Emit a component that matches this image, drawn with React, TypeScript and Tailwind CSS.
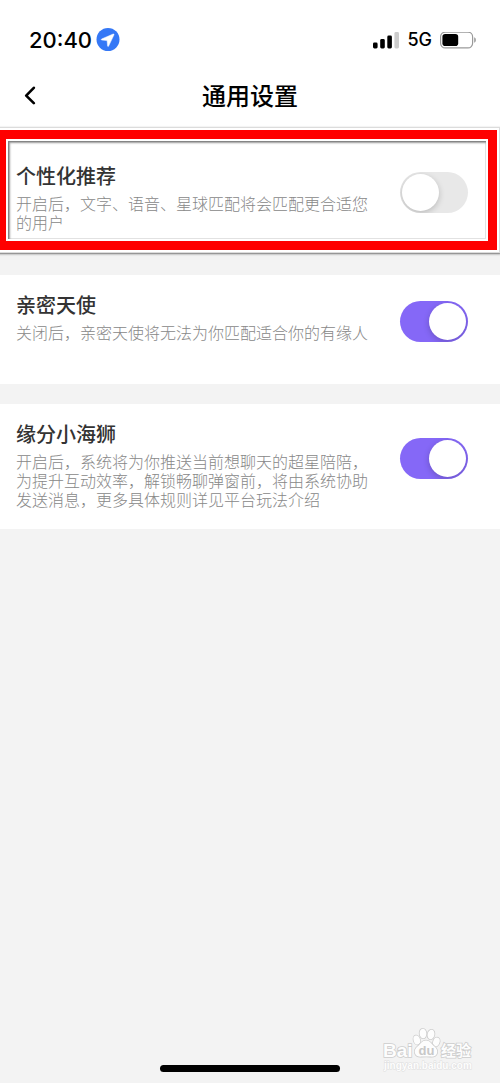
import { useId, useState } from "react";

type Setting = {
  key: string;
  title: string;
  desc: string;
  enabled: boolean;
  highlighted?: boolean;
};

const SETTINGS: Setting[] = [
  {
    key: "recommend",
    title: "个性化推荐",
    desc: "开启后，文字、语音、星球匹配将会匹配更合适您的用户",
    enabled: false,
    highlighted: true,
  },
  {
    key: "angel",
    title: "亲密天使",
    desc: "关闭后，亲密天使将无法为你匹配适合你的有缘人",
    enabled: true,
  },
  {
    key: "sealion",
    title: "缘分小海狮",
    desc: "开启后，系统将为你推送当前想聊天的超星陪陪，为提升互动效率，解锁畅聊弹窗前，将由系统协助发送消息，更多具体规则详见平台玩法介绍",
    enabled: true,
  },
];

function StatusBar() {
  return (
    <div className="flex h-16 items-center justify-between pt-4 pr-6 pl-[29px] font-['Inter','Liberation_Sans',sans-serif] text-black">
      <div className="flex items-center gap-1">
        <span className="text-[22px] leading-6 font-medium">20:40</span>
        <svg className="size-6" viewBox="0 0 24 24" aria-hidden="true">
          <circle cx="12" cy="11.5" r="11.5" fill="#3578f6" />
          <path d="M17.2 6 5.6 11c-.5.3-.4.9.1 1l5.4.6.5 5.4c.1.6.8.7 1 .1L18 6.800c.2-.6-.2-1-.8-.8z" fill="#fff" stroke="#fff" strokeWidth=".5" strokeLinejoin="round" />
        </svg>
      </div>
      <div className="flex items-center gap-2">
        <svg className="h-[17px] w-[26px]" viewBox="0 0 26 17" aria-hidden="true">
          <rect x="0" y="10.5" width="4.6" height="6" rx="1.4" />
          <rect x="7.2" y="7" width="4.6" height="9.5" rx="1.4" />
          <rect x="14.3" y="3.6" width="4.6" height="12.9" rx="1.4" />
          <rect x="21.4" y="0" width="4.6" height="16.5" rx="1.4" fill="#ccc" />
        </svg>
        <span className="text-lg leading-6 font-medium">5G</span>
        <svg className="h-[17px] w-9" viewBox="0 0 36 17" aria-hidden="true">
          <rect x=".6" y=".1" width="32" height="15.8" rx="4.6" fill="none" stroke="#9a9a9a" strokeWidth="1.2" />
          <rect x="2.4" y="1.9" width="15.8" height="12.2" rx="2.8" />
          <path d="M34.2 5.3c2.2.8 2.2 4.600 0 5.400z" fill="#9a9a9a" />
        </svg>
      </div>
    </div>
  );
}

function NavBar({ title }: { title: string }) {
  return (
    <header className="grid h-[62px] grid-cols-[1fr_auto_1fr] items-center px-5 text-black">
      <button type="button" aria-label="返回" className="flex size-5 cursor-pointer items-center justify-center">
        <svg className="size-5" viewBox="0 0 20 20" fill="none" stroke="currentColor" strokeWidth="2.6" strokeLinecap="round" strokeLinejoin="round">
          <path d="M13.8 2.8 6.2 10.6l7.6 7.6" />
        </svg>
      </button>
      <h1 className="text-2xl leading-8 font-medium">{title}</h1>
    </header>
  );
}

function Highlight() {
  return (
    <div className="pointer-events-none absolute -top-[18px] right-px bottom-[3px] -left-[5px] border-2 border-white shadow-[0_0_0_1px_#dcdcdc,1px_1px_2px_1px_#666]">
      <div className="h-full border-[9px] border-[#fe0000]">
        <div className="h-full border-2 border-white shadow-[inset_1px_1px_0_#858585,inset_2px_2px_2px_#999,inset_-1px_-1px_0_#e2e2e2]" />
      </div>
    </div>
  );
}

function SettingRow({ setting }: { setting: Setting }) {
  const id = useId();
  const [on, setOn] = useState(setting.enabled);

  return (
    <section className="relative bg-white pb-4">
      <div className="flex min-h-[93px] items-center justify-between gap-4 pr-8 pl-4">
        <div className="max-w-[360px] self-start pt-4 pb-1">
          <label htmlFor={id} className="block text-xl leading-7 font-medium text-[#333]">
            {setting.title}
          </label>
          <p id={`${id}-desc`} className="mt-1 text-base leading-[19px] font-light text-[#888]">
            {setting.desc}
          </p>
        </div>
        <input
          id={id}
          type="checkbox"
          role="switch"
          aria-describedby={`${id}-desc`}
          checked={on}
          onChange={(e) => setOn(e.target.checked)}
          className="h-[41px] w-[68px] shrink-0 cursor-pointer appearance-none overflow-hidden rounded-full bg-[#e8e8e8] p-[2px] before:block before:size-[37px] before:rounded-full before:bg-white before:shadow-[0_2px_6px_rgba(0,0,0,0.2)] checked:bg-[#8568f7] checked:before:ml-auto"
        />
      </div>
      {setting.highlighted && <Highlight />}
    </section>
  );
}

function Watermark() {
  return (
    <svg
      className="absolute right-6 bottom-2 h-12 w-24"
      viewBox="0 0 96 48"
      fill="#fdfdfd"
      stroke="#cdcdcd"
      strokeWidth="1.6"
      paintOrder="stroke"
      role="img"
      aria-label="Baidu 经验"
    >
      <text x="3" y="30" fontSize="19" fontWeight="700" fontFamily="Liberation Sans, sans-serif">Bai</text>
      <ellipse cx="36.800" cy="13" rx="3.2" ry="4.6" transform="rotate(-16 36.800 13)" />
      <ellipse cx="43" cy="6.500" rx="3.400" ry="4.800" transform="rotate(-4 43 6.500)" />
      <ellipse cx="51" cy="7.500" rx="3.400" ry="4.800" transform="rotate(12 51 7.500)" />
      <ellipse cx="56.300" cy="15" rx="3.200" ry="4.600" transform="rotate(20 56.300 15)" />
      <path d="M46 13.500c-4 0-5.500 3.500-8.200 5.800-2.500 2-3.600 4.200-2.800 7 1 3.200 4.200 3.600 6.800 3.300 3-.3 5.600-.3 8.400 0 3 .3 5.800-.1 6.800-3.300.8-2.800-.4-5-2.800-7-2.700-2.300-4.200-5.800-8.200-5.800z" />
      <text x="38.500" y="28" fontSize="13" fontWeight="700" fill="#c8c8c8" stroke="none" fontFamily="Liberation Sans, sans-serif">du</text>
      <text x="61" y="29" fontSize="15" fontWeight="700" fontFamily="Noto Sans CJK SC, sans-serif">经验</text>
      <text x="4" y="42" fontSize="10" fontWeight="700" strokeWidth="1" stroke="#dedede" fontFamily="Liberation Sans, sans-serif">jingyan.baidu.com</text>
    </svg>
  );
}

export default function App() {
  return (
    <div className="flex min-h-screen flex-col overflow-x-clip bg-[#f3f3f3] font-['Noto_Sans_CJK_SC',sans-serif]">
      <div className="bg-white pb-5">
        <StatusBar />
        <NavBar title="通用设置" />
      </div>
      <main className="flex flex-col gap-5">
        {SETTINGS.map((s) => (
          <SettingRow key={s.key} setting={s} />
        ))}
      </main>
      <footer className="relative mt-auto pt-16 pb-[11px]">
        <Watermark />
        <div className="mx-auto h-[7px] w-[36%] rounded-full bg-black" />
      </footer>
    </div>
  );
}
